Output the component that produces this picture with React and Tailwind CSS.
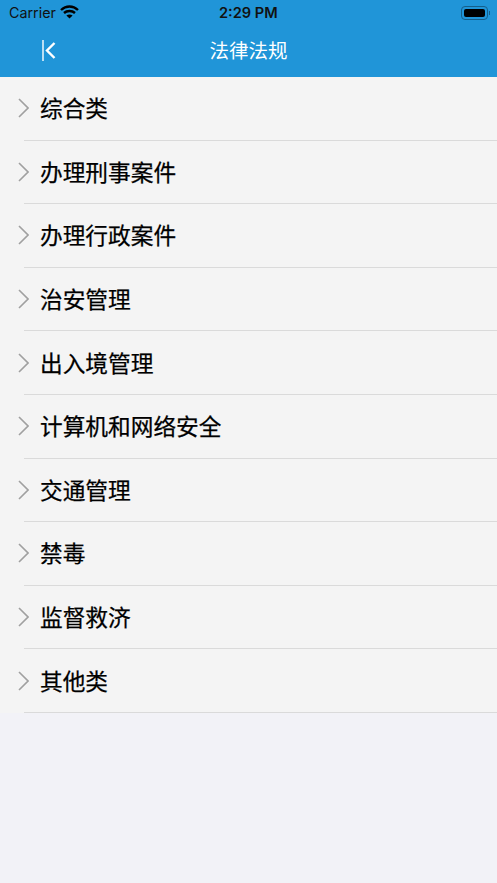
const items = ["综合类","办理刑事案件","办理行政案件","治安管理","出入境管理","计算机和网络安全","交通管理","禁毒","监督救济","其他类"];

function Row({ label }) {
  return (
    <div className="h-[63.6px] relative flex items-center pl-[18px]">
      <svg width="11" height="20" viewBox="0 0 11 20" fill="none" className="shrink-0 mb-[1px]">
        <path d="M1 1 L10 10 L1 19" stroke="#a0a0a0" strokeWidth="1.6" />
      </svg>
      <span className="ml-[11px] text-[22.7px] leading-[30px] font-normal text-black [-webkit-text-stroke:0.25px_black] mt-[1px]">{label}</span>
      <div className="absolute left-[24px] right-0 bottom-0 h-[1px] bg-[#dadada]" />
    </div>
  );
}

export default function App() {
  return (
    <div className="w-[497px] h-[883px] bg-[#f2f2f7] overflow-hidden" style={{ fontFamily: '"Liberation Sans","Noto Sans CJK SC",sans-serif' }}>
      <div className="h-[77px] bg-[#2095d8] flex flex-col">
        <div className="h-[25px] flex items-center relative pl-[9px] pr-[7px] text-black">
          <span className="text-[14.3px] leading-[25px] text-[#111]" style={{ fontFamily: '"Inter",sans-serif' }}>Carrier</span>
          <svg width="19" height="14" viewBox="0 0 19 14" className="ml-[4px] mb-[1px]" fill="none" stroke="black" strokeWidth="2.4">
            <path d="M1 5 C6 0.3 13 0.3 18 5" />
            <path d="M4 8 C7 5.3 12 5.3 15 8" />
            <path d="M9.5 13.6 L6.4 10.4 C8.2 9.2 10.8 9.2 12.6 10.4 Z" fill="black" stroke="none" />
          </svg>
          <span className="absolute left-[219px] top-[1px] text-[14.6px] leading-[25px] font-semibold text-[#111]" style={{ fontFamily: '"Inter",sans-serif' }}>2:29 PM</span>
          <div className="ml-auto flex items-center">
            <div className="w-[27px] h-[14px] rounded-[4px] border border-[#155f8a] p-[2px]">
              <div className="w-full h-full rounded-[2px] bg-black" />
            </div>
            <div className="ml-[1px] w-[1px] h-[4px] bg-[#155f8a]" />
          </div>
        </div>
        <div className="flex-1 flex items-center justify-center relative">
          <svg width="14" height="21" viewBox="0 0 14 21" className="absolute left-[42px] top-[15px]" fill="none" stroke="white">
            <path d="M1 0 V21" strokeWidth="1.4" />
            <path d="M12.5 3 L5 10.5 L12.5 18" strokeWidth="2.4" />
          </svg>
          <span className="text-[19.5px] leading-[26px] text-white mb-[1px]">法律法规</span>
        </div>
      </div>
      <div className="bg-[#f4f4f4]">
        {items.map((t) => <Row key={t} label={t} />)}
      </div>
    </div>
  );
}
